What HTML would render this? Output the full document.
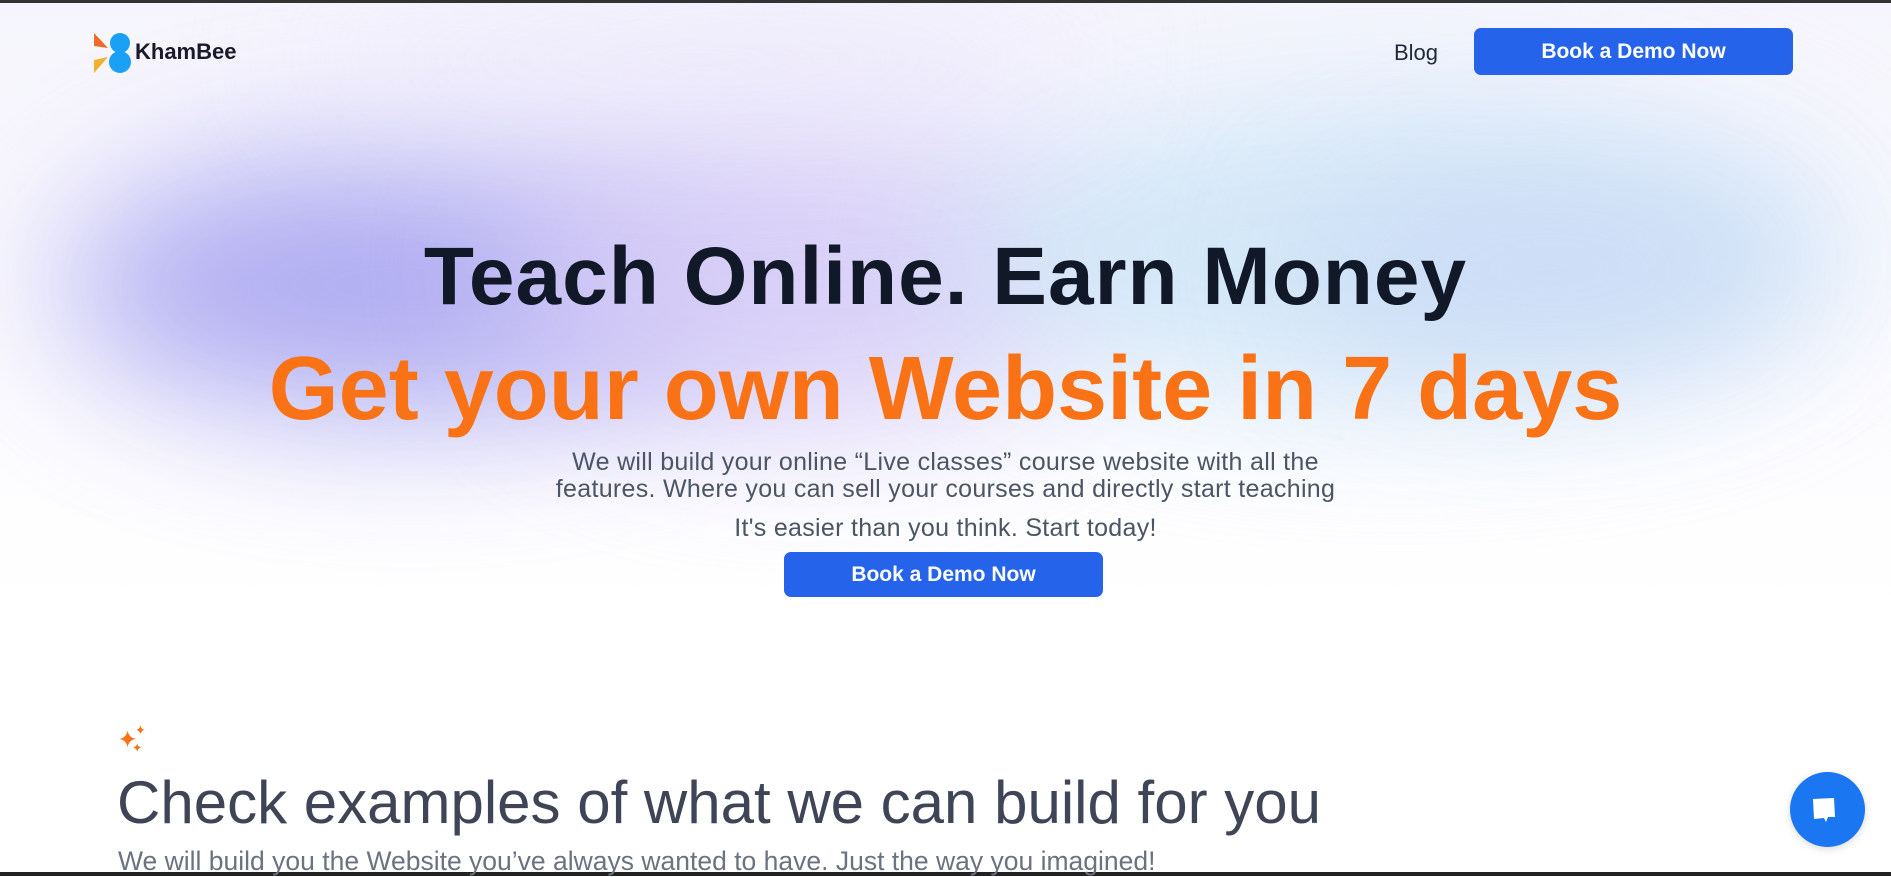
<!DOCTYPE html>
<html><head><meta charset="utf-8"><style>
*{margin:0;padding:0;box-sizing:border-box}
body{width:1891px;height:876px;overflow:hidden;background:#fff;font-family:"Liberation Sans",sans-serif;position:relative}
.bg{position:absolute;inset:0;overflow:hidden;background:linear-gradient(#f6f5fd,#fff 70%)}
.blob{position:absolute;border-radius:50%;filter:blur(70px)}
.abs{position:absolute;white-space:nowrap}
.btn{position:absolute;background:#2563eb;color:#fff;border-radius:7px;font-weight:bold;text-align:center}
</style></head><body>
<div class="bg">
<div class="blob" style="left:60px;top:150px;width:700px;height:270px;background:#a9a6f0;opacity:.9"></div>
<div class="blob" style="left:500px;top:110px;width:600px;height:320px;background:#d6cdf7;opacity:.9"></div>
<div class="blob" style="left:950px;top:100px;width:900px;height:300px;background:#cfe6f7;opacity:.9"></div>
<div class="blob" style="left:1300px;top:180px;width:500px;height:180px;background:#c9d8f5;opacity:.8"></div>
<div class="blob" style="left:300px;top:0;width:800px;height:120px;background:#ece9fb;opacity:.8"></div>
</div>
<div style="position:absolute;left:0;top:0;width:1891px;height:3px;background:#333"></div>
<div style="position:absolute;left:0;top:872px;width:1891px;height:4px;background:#222"></div>
<svg class="abs" style="left:93px;top:32px" width="40" height="42" viewBox="0 0 40 42">
<polygon points="1,1 15,16 1,14" fill="#f06a28"/>
<polygon points="1,41 15,25 1,28" fill="#f0b030"/>
<circle cx="27" cy="11" r="10" fill="#1aa0f5"/>
<circle cx="27" cy="30" r="11" fill="#1aa0f5"/>
</svg>
<div class="abs" style="left:135px;top:39px;font:bold 22px 'Liberation Sans',sans-serif;color:#1a1a2a;letter-spacing:0px">KhamBee</div>
<div class="abs" style="left:1394px;top:40px;font-size:22px;color:#1f2937">Blog</div>
<div class="btn" style="left:1474px;top:28px;width:319px;height:47px;line-height:47px;font-size:21px">Book a Demo Now</div>
<div class="abs" style="left:0;width:1891px;text-align:center;top:230px;font-size:82px;font-weight:bold;color:#111827;letter-spacing:1px">Teach Online. Earn Money</div>
<div class="abs" style="left:0;width:1891px;text-align:center;top:338px;font-size:90px;font-weight:bold;color:#f97316;letter-spacing:0px">Get your own Website in 7 days</div>
<div class="abs" style="left:0;width:1891px;text-align:center;top:449px;font-size:25px;line-height:27px;color:#4b5563;letter-spacing:0.3px">We will build your online “Live classes” course website with all the<br>features. Where you can sell your courses and directly start teaching</div>
<div class="abs" style="left:0;width:1891px;text-align:center;top:514px;font-size:25px;color:#4b5563;letter-spacing:0.3px">It's easier than you think. Start today!</div>
<div class="btn" style="left:784px;top:552px;width:319px;height:45px;line-height:45px;font-size:21px">Book a Demo Now</div>
<svg class="abs" style="left:118px;top:724px" width="32" height="32" viewBox="0 0 30 30" fill="#f97316">
<path d="M9 6 Q10 13 17 14 Q10 15 9 22 Q8 15 1 14 Q8 13 9 6Z"/>
<path d="M21 1 Q21.5 5 25 5.5 Q21.5 6 21 10 Q20.5 6 17 5.5 Q20.5 5 21 1Z"/>
<path d="M18 18 Q18.5 21.5 22 22 Q18.5 22.5 18 26 Q17.5 22.5 14 22 Q17.5 21.5 18 18Z"/>
</svg>
<div class="abs" style="left:117px;top:768px;font-size:60px;color:#3f4556">Check examples of what we can build for you</div>
<div class="abs" style="left:118px;top:846px;font-size:26.5px;color:#6b7280">We will build you the Website you’ve always wanted to have. Just the way you imagined!</div>
<div style="position:absolute;left:1790px;top:772px;width:75px;height:75px;border-radius:50%;background:#1b76f2;box-shadow:0 2px 8px rgba(0,0,0,.15)"></div>
<svg class="abs" style="left:1806px;top:795px" width="40" height="32" viewBox="0 0 40 32"><path d="M7 4 L28 3 L29 22 L22 22 L20 27 L18 23 L8 24Z" fill="#fff"/></svg>
</body></html>
